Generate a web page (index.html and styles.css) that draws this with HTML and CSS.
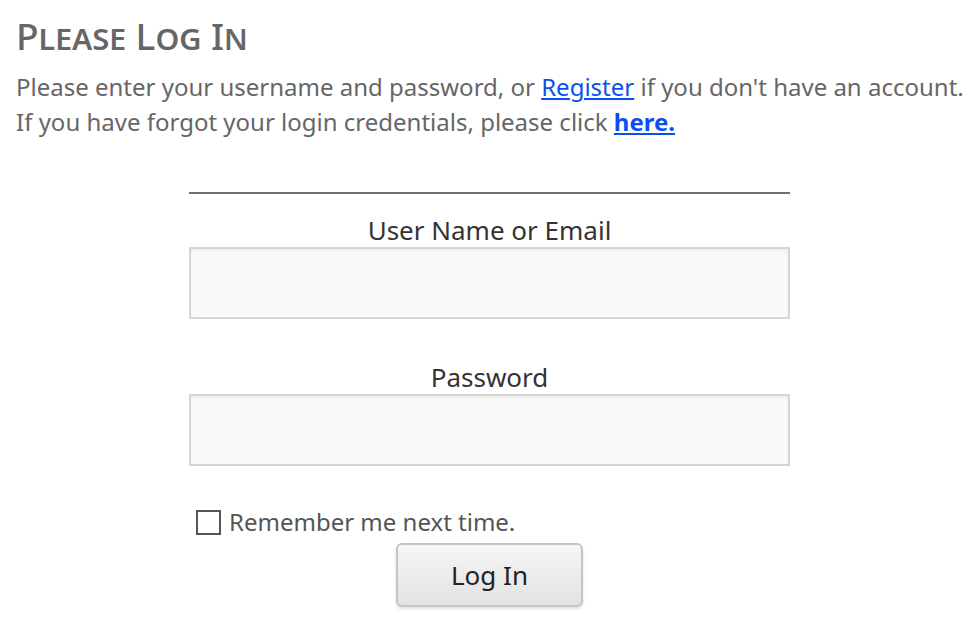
FILE: index.html
```html
<!DOCTYPE html>
<html lang="en">
<head>
    <meta charset="UTF-8">
    <meta name="viewport" content="width=device-width, initial-scale=1.0">
    <title>Please Log In</title>
    <link rel="stylesheet" href="styles.css">
</head>
<body>
    <div class="page">
        <h1 class="title">Please Log In</h1>
        <p class="intro">
            Please enter your username and password, or <a href="#" class="link">Register</a> if you don't have an account.<br>
            If you have forgot your login credentials, please click <a href="#" class="link strong">here.</a>
        </p>

        <form class="login" onsubmit="return false;">
            <div class="field">
                <label for="username" class="field-label">User Name or Email</label>
                <input type="text" id="username" class="field-input">
            </div>
            <div class="field">
                <label for="password" class="field-label">Password</label>
                <input type="password" id="password" class="field-input">
            </div>
            <label class="remember">
                <input type="checkbox" class="remember-box">
                <span>Remember me next time.</span>
            </label>
            <div class="actions">
                <button type="submit" class="button">Log In</button>
            </div>
        </form>
    </div>
</body>
</html>
```

FILE: styles.css
```css
body {
    margin: 0;
    background-color: #fff;
    font-family: 'Noto Sans', 'Open Sans', sans-serif;
    color: #666;
}

.page {
    padding: 14px 13px 14px 16px;
}

.title {
    margin: 0;
    font-size: 37px;
    font-weight: 500;
    font-variant: small-caps;
    line-height: 44px;
    color: #666;
}

.intro {
    margin: 11px 0 0;
    font-size: 24px;
    line-height: 35px;
    white-space: nowrap;
    color: #666;
}

.link {
    color: #0b4ff0;
}

.link.strong {
    font-weight: 700;
}

.login {
    width: 601px;
    margin: 53px auto 0;
    border-top: 2px solid #6f6f6f;
    padding-top: 19px;
}

.field {
    display: flex;
    flex-direction: column;
    margin-bottom: 41px;
}

.field-label {
    text-align: center;
    font-size: 26px;
    line-height: 34px;
    color: #333;
}

.field-input {
    box-sizing: border-box;
    width: 100%;
    height: 72px;
    margin: 0;
    border: 2px solid #d6d6d6;
    background-color: #f9f9f9;
    box-shadow: inset 0 2px 3px rgba(0, 0, 0, 0.05);
    font-size: 20px;
}

.remember {
    display: flex;
    align-items: center;
    gap: 8px;
    margin-left: 7px;
    font-size: 24px;
    line-height: 30px;
    color: #555;
}

.remember-box {
    appearance: none;
    width: 25px;
    height: 25px;
    margin: 0;
    border: 2px solid #555;
    background-color: #fff;
}

.actions {
    display: flex;
    justify-content: center;
    margin-top: 6px;
}

.button {
    width: 187px;
    height: 64px;
    font-family: inherit;
    font-size: 26px;
    color: #222;
    border: 2px solid #c4c4c4;
    border-radius: 6px;
    background: linear-gradient(#f6f6f6, #e2e2e2);
    box-shadow: 0 2px 3px rgba(0, 0, 0, 0.12);
    cursor: pointer;
}
```
